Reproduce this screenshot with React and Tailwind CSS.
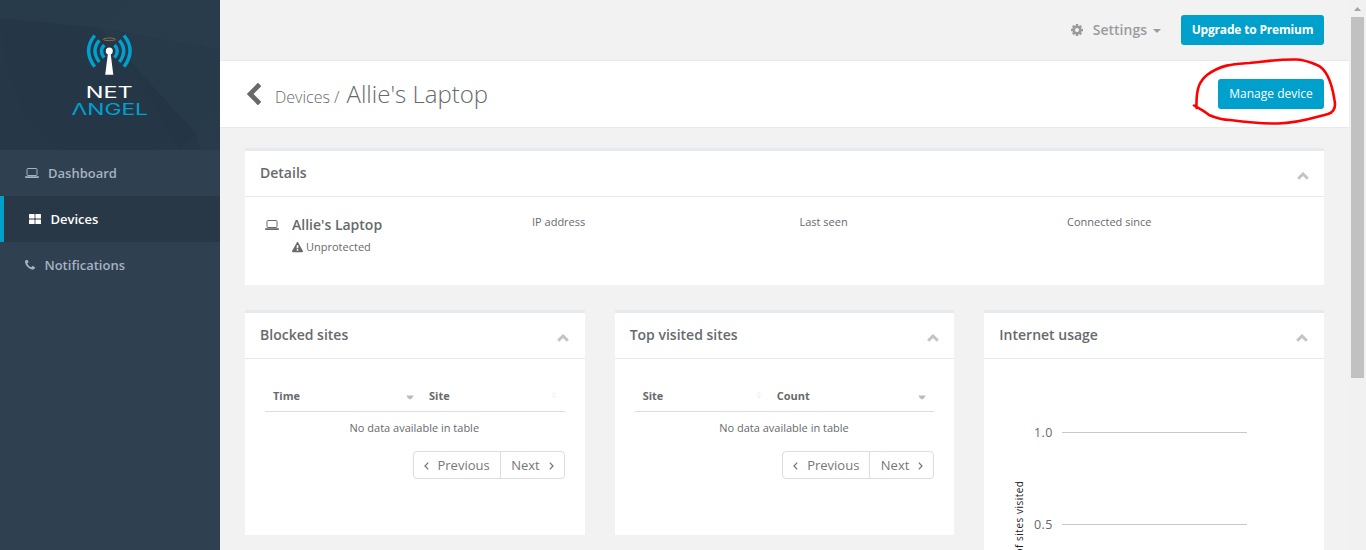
const I = {
  left: "M1427 301l-531 531 531 531q19 19 19 45t-19 45l-166 166q-19 19-45 19t-45-19l-742-742q-19-19-19-45t19-45l742-742q19-19 45-19t45 19l166 166q19 19 19 45t-19 45z",
  cog: "M1152 896q0-106-75-181t-181-75-181 75-75 181 75 181 181 75 181-75 75-181zm512-109v222q0 12-8 23t-20 13l-185 28q-19 54-39 91 35 50 107 138 10 12 10 25t-9 23q-27 37-99 108t-94 71q-12 0-26-9l-138-108q-44 23-91 38-16 136-29 186-7 28-36 28h-222q-14 0-24.5-8.5t-11.5-21.5l-28-184q-49-16-90-37l-141 107q-10 9-25 9-14 0-25-11-126-114-165-168-7-10-7-23 0-12 8-23 15-21 51-66.5t54-70.5q-27-50-41-99l-183-27q-13-2-21-12.5t-8-23.5v-222q0-12 8-23t19-13l186-28q14-46 39-92-40-57-107-138-10-12-10-24 0-10 9-23 26-36 98.5-107.5t94.5-71.5q13 0 26 10l138 107q44-23 91-38 16-136 29-186 7-28 36-28h222q14 0 24.5 8.5t11.5 21.5l28 184q49 16 90 37l142-107q9-9 24-9 13 0 25 10 129 119 165 170 7 8 7 22 0 12-8 23-15 21-51 66.5t-54 70.5q26 50 41 98l183 28q13 2 21 12.5t8 23.5z",
  phone: "M1600 1240q0 27-10 70.5t-21 68.5q-21 50-122 106-94 51-186 51-27 0-53-3.5t-57.5-12.5-47-14.5-55.5-20.5-49-18q-98-35-175-83-127-79-264-216t-216-264q-48-77-83-175-3-9-18-49t-20.5-55.5-14.5-47-12.5-57.5-3.5-53q0-92 51-186 56-101 106-122 25-11 68.5-21t70.5-10q14 0 21 3 18 6 53 76 11 19 30 54t35 63.5 31 53.5q3 4 17.5 25t21.5 35.5 7 28.5q0 20-28.5 50t-62 55-62 53-28.5 46q0 9 5 22.5t8.5 20.5 14 24 11.5 19q76 137 174 235t235 174q2 1 19 11.5t24 14 20.5 8.5 22.5 5q18 0 46-28.5t53-62 55-62 50-28.5q14 0 28.5 7t35.5 21.5 25 17.5q25 15 53.5 31t63.5 35 54 30q70 35 76 53 3 7 3 21z",
  warn: "M1024 1375v-190q0-14-9.5-23.5t-22.5-9.5h-192q-13 0-22.5 9.5t-9.5 23.5v190q0 14 9.5 23.5t22.5 9.5h192q13 0 22.5-9.5t9.5-23.5zm-2-374l18-459q0-12-10-19-13-11-24-11h-220q-11 0-24 11-10 7-10 21l17 457q0 10 10 16.5t24 6.5h185q14 0 23.5-6.5t10.5-16.5zm-14-934l768 1408q35 63-2 126-17 29-46.5 46t-63.5 17h-1536q-34 0-63.5-17t-46.5-46q-37-63-2-126l768-1408q17-31 47-49t65-18 65 18 47 49z",
};

function Icon({ d, box = "0 0 1792 1792", className }) {
  return (
    <svg viewBox={box} className={`shrink-0 ${className}`} fill="currentColor">
      <path d={d} />
    </svg>
  );
}

function Laptop({ className = "" }) {
  return (
    <svg viewBox="0 0 14 10" className={`h-[10px] w-[14px] shrink-0 ${className}`}>
      <rect x="2" y="0.5" width="10" height="7" rx="0.8" fill="none" stroke="currentColor" />
      <path d="M0 8.3h14v.7q0 1-1.2 1H1.2Q0 10 0 9z" fill="currentColor" />
    </svg>
  );
}

function Logo() {
  return (
    <svg viewBox="0 0 220 150" className="block h-[150px] w-[220px] shrink-0">
      <rect width="220" height="150" fill="#263848" />
      <path d="M0 0H130L100 28L0 18z" fill="#283b4a" />
      <path d="M130 0H220V50L100 28z" fill="#293c4b" />
      <path d="M0 19L100 28L30 125L10 80z" fill="#253747" />
      <path d="M100 28L196 134L150 150H60L30 125z" fill="#253747" />
      <path d="M100 28L220 50V110L196 134z" fill="#273a49" />
      <path d="M196 134L220 110V150H200z" fill="#293b4a" />
      <path d="M130 62L196 134L180 150z" fill="#243646" />
      <g fill="none" stroke="#00a0cf" strokeWidth="3.400">
        <path d="M94.700 35.500Q82.500 50.500 94.700 66.800" />
        <path d="M99.300 40.300Q90.700 50.500 99.300 62" />
        <path d="M104.200 45Q98.600 51 104.200 57.600" />
        <path d="M124 35.500Q136.200 50.500 124 66.800" />
        <path d="M119.400 40.300Q128 50.500 119.400 62" />
        <path d="M114.500 45Q120.100 51 114.500 57.600" />
      </g>
      <ellipse cx="109.300" cy="39.300" rx="6" ry="1.300" fill="none" stroke="#b38340" strokeWidth="0.700" />
      <circle cx="109.300" cy="51" r="3.500" fill="#fff" />
      <path d="M108 53H110.600L113.300 74.700H105.200z" fill="#fff" />
      <g fontFamily="Inter, 'Liberation Sans', sans-serif" fontSize="15.800" fontWeight="400">
        <text x="85.800" y="97.800" fill="#fff" textLength="47" lengthAdjust="spacingAndGlyphs">NET</text>
        <text x="71.500" y="115" fill="#00a0cf" textLength="76.500" lengthAdjust="spacingAndGlyphs">ΛNGEL</text>
      </g>
    </svg>
  );
}

function Panel({ title, className = "", children }) {
  return (
    <section className={`flex flex-col border-t-[3px] border-[#e7eaec] bg-white ${className}`}>
      <header className="flex h-[46px] shrink-0 items-center justify-between border-b border-[#e7eaec] px-[15px] pb-[2px]">
        <h5 className="text-[14px] leading-[20px] font-semibold">{title}</h5>
        <svg viewBox="0 0 12 8" className="mt-[6px] mr-[0.500px] h-[8px] w-[12px]">
          <path d="M1.200 6.800L6 2L10.800 6.800" fill="none" stroke="#c4c4c4" strokeWidth="3" />
        </svg>
      </header>
      {children}
    </section>
  );
}

function Sorted() {
  return (
    <svg viewBox="0 0 8 5" className="mt-[2px] h-[5px] w-[8px]">
      <path d="M0.500 0.500H7.500Q7.300 2.500 4 4.500Q0.700 2.500 0.500 0.500z" fill="#b9bbbd" />
    </svg>
  );
}

function Unsorted() {
  return (
    <svg viewBox="0 0 6 8" className="mb-[3px] h-[8px] w-[6px]" fill="#f6f6f6">
      <path d="M3 0L6 3.500H0zM3 8L0 4.500H6z" />
    </svg>
  );
}

function Chev({ flip }) {
  return (
    <svg viewBox="0 0 5 8" className={flip ? "h-[8px] w-[5px] rotate-180" : "h-[8px] w-[5px]"}>
      <path d="M4.200 0.600L1 4L4.200 7.400" fill="none" stroke="currentColor" strokeWidth="1.300" />
    </svg>
  );
}

function Table({ first, second, firstWidth, sorted }) {
  return (
    <div className="flex flex-col px-5 pt-[20px] text-[11px]">
      <div className="flex h-[33px] border-b border-[#dddddd] pt-[2px] font-bold">
        <div className={`flex items-center justify-between pr-[7px] pl-2 ${firstWidth}`}>
          <span>{first}</span>
          {sorted === 0 ? <Sorted /> : <Unsorted />}
        </div>
        <div className="flex flex-1 items-center justify-between pr-[8px] pl-2">
          <span>{second}</span>
          {sorted === 1 ? <Sorted /> : <Unsorted />}
        </div>
      </div>
      <div className="flex h-[33px] items-center justify-center pr-px">No data available in table</div>
      <div className="mt-[6px] flex h-[28px] self-end rounded-[4px] border border-[#dddddd] text-[13px] text-[#757779]">
        <div className="flex w-[87px] items-center justify-between border-r border-[#dddddd] pt-[2px] pr-[10px] pl-[10px]">
          <Chev />
          <span>Previous</span>
        </div>
        <div className="flex w-[63px] items-center justify-between pt-[2px] pr-[10px] pl-[10.500px]">
          <span>Next</span>
          <Chev flip />
        </div>
      </div>
    </div>
  );
}

export default function App() {
  return (
    <div className="relative flex h-[550px] w-[1366px] overflow-hidden bg-[#f2f2f2] font-['Open_Sans',sans-serif] text-[#676a6c]">
      <aside className="flex w-[220px] shrink-0 flex-col bg-[#2f4050] text-[13px] font-semibold text-[#a7b1c2]">
        <Logo />
        <nav className="flex flex-col">
          <a className="flex h-[46px] items-center pl-[25px]">
            <Laptop />
            <span className="mt-[2px] ml-[9px]">Dashboard</span>
          </a>
          <a className="flex h-[46px] items-center border-l-4 border-[#00a0cd] bg-[#293846] pl-[25px] text-white">
            <svg viewBox="0 0 12 10" className="h-[10px] w-[12px]" fill="currentColor">
              <rect width="5.600" height="4.600" rx="0.600" />
              <rect x="6.400" width="5.600" height="4.600" rx="0.600" />
              <rect y="5.400" width="5.600" height="4.600" rx="0.600" />
              <rect x="6.400" y="5.400" width="5.600" height="4.600" rx="0.600" />
            </svg>
            <span className="mt-[2px] ml-[9.500px]">Devices</span>
          </a>
          <a className="flex h-[46px] items-center pl-[25px]">
            <Icon d={I.phone} box="192 256 1408 1280" className="h-[10px] w-[10px]" />
            <span className="mt-[2px] ml-[9.500px]">Notifications</span>
          </a>
        </nav>
      </aside>

      <main className="flex w-[1129px] shrink-0 flex-col">
        <div className="flex h-[61px] shrink-0 items-center justify-end border-b border-[#e7eaec] pr-[25px]">
          <div className="mb-[2px] flex items-center text-[14px] font-semibold text-[#999c9e]">
            <Icon d={I.cog} className="mt-px -ml-px h-[14px] w-[14px]" />
            <span className="ml-[9px]">Settings</span>
            <svg viewBox="0 0 8 4" className="mt-[3px] ml-[6px] h-[4px] w-[8px]">
              <path d="M0 0H8L4 4z" fill="currentColor" />
            </svg>
          </div>
          <button className="ml-[20px] h-[30px] w-[143px] rounded-[3px] bg-[#00a0cd] text-[12px] font-bold tracking-[-0.18px] whitespace-nowrap text-white">
            Upgrade to Premium
          </button>
        </div>

        <div className="flex h-[67px] shrink-0 items-center justify-between border-b border-[#e7eaec] bg-white pr-[25px] pl-[27px]">
          <div className="flex items-center">
            <Icon d={I.left} box="410 26 1036 1612" className="h-[22px] w-[14px]" />
            <h2 className="mt-[2px] ml-[14px] flex items-baseline text-[24px] leading-[30px] font-light whitespace-nowrap">
              <span className="w-[71.500px] text-[16px] font-[350]">Devices /</span>
              <span>Allie's Laptop</span>
            </h2>
          </div>
          <button className="h-[30px] w-[106px] rounded-[3px] bg-[#00a0cd] text-[12px] font-medium text-white">
            Manage device
          </button>
        </div>

        <div className="flex flex-col gap-[25px] px-[25px] pt-[20px]">
          <Panel title="Details" className="h-[137px]">
            <div className="flex px-5 pt-[17px] text-[11px] leading-[16px]">
              <Laptop className="mt-[6px]" />
              <div className="mt-px ml-[13px] w-[240px]">
                <div className="text-[14px] leading-[20px] font-semibold">Allie's Laptop</div>
                <div className="mt-[4px] flex items-center">
                  <Icon d={I.warn} className="h-[11px] w-[11px]" />
                  <span className="ml-[3px]">Unprotected</span>
                </div>
              </div>
              <div className="w-[267.500px]">IP address</div>
              <div className="w-[267.500px]">Last seen</div>
              <div>Connected since</div>
            </div>
          </Panel>

          <div className="grid grid-cols-3 gap-[30px]">
            <Panel title="Blocked sites" className="h-[225px]">
              <Table first="Time" second="Site" firstWidth="w-[156px]" sorted={0} />
            </Panel>
            <Panel title="Top visited sites" className="h-[225px]">
              <Table first="Site" second="Count" firstWidth="w-[134px]" sorted={1} />
            </Panel>
            <Panel title="Internet usage" className="h-[400px]">
              <svg viewBox="0 0 340 300" className="h-[300px] w-[340px]" fontFamily="'Open Sans', sans-serif">
                <path d="M78 73.500H263M78 165.500H263" stroke="#c8c8c8" />
                <text x="50" y="78" fontSize="12.500" fill="#676a6c" textLength="18.500">1.0</text>
                <text x="50" y="170" fontSize="12.500" fill="#676a6c" textLength="18.500">0.5</text>
                <text transform="translate(39 121.500) rotate(-90)" textAnchor="end" fontSize="10" letterSpacing="0.500" fill="#222">
                  Number of sites visited
                </text>
              </svg>
            </Panel>
          </div>
        </div>
      </main>

      <div className="flex w-[17px] shrink-0 flex-col items-center bg-[#f1f1f1]">
        <svg viewBox="0 0 17 17" className="h-[17px] w-[17px] shrink-0">
          <path d="M5 11H12L8.500 7z" fill="#a3a3a3" />
        </svg>
        <div className="h-[361px] w-[13px] bg-[#c1c1c1]" />
      </div>

      <svg viewBox="0 0 170 80" className="pointer-events-none absolute top-[53px] left-[1180px] h-[80px] w-[170px]">
        <path
          d="M14 52.500C20 56 24 58 29 62C36 65 41 67 50 67C65 69 80 71 98 70.500C120 70 132 65 148 61C154 59 156 54 154.500 47C152 31 147 16 137 12C130 9 125 7 117 6.500C99 6 85 8.500 69 10C55 11 42 11 27 22C20 28 16 34 16.500 55"
          fill="none"
          stroke="#ff0000"
          strokeWidth="2.600"
          strokeLinecap="round"
          strokeLinejoin="round"
        />
      </svg>
    </div>
  );
}
